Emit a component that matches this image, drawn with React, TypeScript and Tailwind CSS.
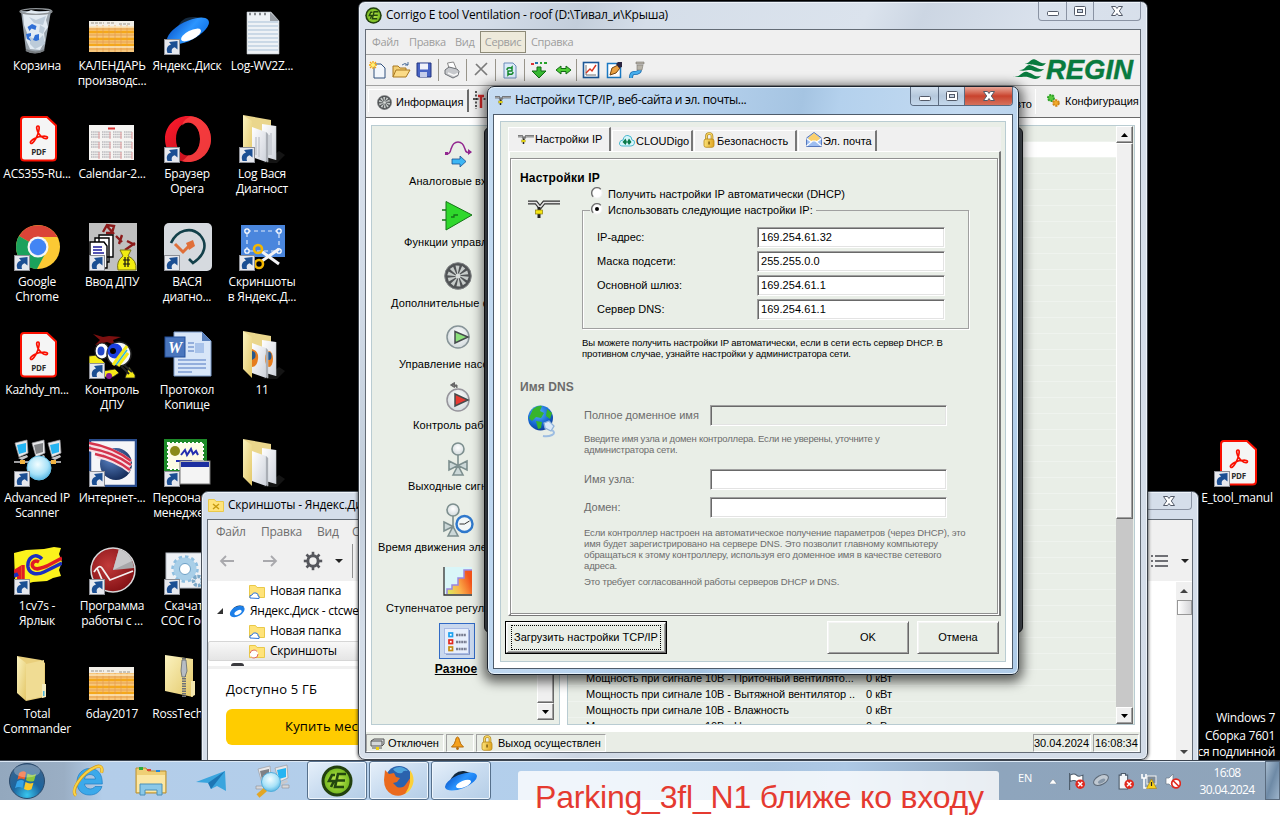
import React from "react";

type Kids = { children?: React.ReactNode };

const SEGOE = "font-['Open_Sans','Noto_Sans',sans-serif]";
const MSSANS = "font-['Liberation_Sans',sans-serif]";

/* ---------- shared gradients ---------- */
function Defs() {
  return (
    <svg width="0" height="0" className="absolute">
      <defs>
        <linearGradient id="folder" x1="0" x2="1" y1="0" y2="1">
          <stop offset="0" stopColor="#fbf3c0" />
          <stop offset="1" stopColor="#e3c768" />
        </linearGradient>
        <linearGradient id="paper" x1="0" x2="1" y1="0" y2="1">
          <stop offset="0" stopColor="#ffffff" />
          <stop offset="1" stopColor="#cfd3dc" />
        </linearGradient>
        <linearGradient id="blue" x1="0" x2="1" y1="0" y2="1">
          <stop offset="0" stopColor="#0a56c8" />
          <stop offset="0.5" stopColor="#2c95ff" />
          <stop offset="1" stopColor="#0d6fe6" />
        </linearGradient>
        <radialGradient id="glass" cx="0.45" cy="0.35" r="0.7">
          <stop offset="0" stopColor="#f2fdff" />
          <stop offset="0.6" stopColor="#a8e2f8" />
          <stop offset="1" stopColor="#49b0e0" />
        </radialGradient>
        <linearGradient id="opera" x1="0" x2="1" y1="0" y2="1">
          <stop offset="0" stopColor="#ff1b2d" />
          <stop offset="1" stopColor="#b30d18" />
        </linearGradient>
        <radialGradient id="orb" cx="0.5" cy="0.9" r="0.9">
          <stop offset="0" stopColor="#38c6ee" />
          <stop offset="0.45" stopColor="#1c659f" />
          <stop offset="1" stopColor="#3e638a" />
        </radialGradient>
        <linearGradient id="gold" x1="0" x2="1" y1="0" y2="0">
          <stop offset="0" stopColor="#fbe27a" />
          <stop offset="1" stopColor="#e0a520" />
        </linearGradient>
        <linearGradient id="heat" x1="0" x2="1" y1="1" y2="0.6">
          <stop offset="0" stopColor="#d8f060" />
          <stop offset="0.5" stopColor="#fbb24c" />
          <stop offset="1" stopColor="#f2541b" />
        </linearGradient>
        <radialGradient id="lime" cx="0.5" cy="0.5" r="0.5">
          <stop offset="0" stopColor="#c4ee50" />
          <stop offset="1" stopColor="#76ba22" />
        </radialGradient>
        <radialGradient id="red" cx="0.4" cy="0.4" r="0.7">
          <stop offset="0" stopColor="#c23b3b" />
          <stop offset="1" stopColor="#7d0c10" />
        </radialGradient>
        <radialGradient id="navy" cx="0.35" cy="0.3" r="0.8">
          <stop offset="0" stopColor="#5c86c8" />
          <stop offset="1" stopColor="#0f2450" />
        </radialGradient>
        <radialGradient id="bulb" cx="0.5" cy="0.4" r="0.6">
          <stop offset="0" stopColor="#ffffff" />
          <stop offset="1" stopColor="#d3dbdd" />
        </radialGradient>
        <radialGradient id="earth" cx="0.4" cy="0.3" r="0.8">
          <stop offset="0" stopColor="#5ab8ff" />
          <stop offset="0.6" stopColor="#1464d0" />
          <stop offset="1" stopColor="#0b2f80" />
        </radialGradient>
      </defs>
    </svg>
  );
}

/* ---------- desktop icons (48 x 48) ---------- */
function Ico({ children }: Kids) {
  return (
    <svg width="48" height="48" viewBox="0 0 48 48" className="block">
      {children}
    </svg>
  );
}

function Arrow() {
  return (
    <g transform="translate(0 32)">
      <rect x="0.5" y="0.5" width="15" height="15" fill="#e6e8ee" stroke="#8d8f96" />
      <path d="M3.500 14C1.500 9 4 6.500 7 5.500L5 3l8.500-1v8.500L10.700 8.300C8 9.200 7 11 8 14z" fill="#1c4f93" />
    </g>
  );
}

const Bin = () => (
  <Ico>
    <path d="M6 4l5 40q8 4.500 18 0l7-40z" transform="translate(1 0)" fill="#b4c0ca" opacity=".85" />
    <path d="M9 7l8-4 8 2 10-1-3 9 2 7-4 6 1 8-5 9-10-1-4-9 1-7-3-8z" fill="#e2ebf3" />
    <path d="M15 10l7 3 10-4-3 9-9-2zM16 30l8 3 5-5 2 9-10 5-5-5zM26 18l5 3-2 6-4-2z" fill="#bccbd9" />
    <ellipse cx="22" cy="4.500" rx="16" ry="2.800" fill="none" stroke="#8f9498" strokeWidth="1.300" />
    <path d="M13.500 20l4.500-3 4.500 2-1 4-4-1.500-2 2.500zM12 27l5-1v3l-2 1 2 4-4-2zM19 33l2-5 4-1v6l-3 1z" fill="#2f6fd6" />
    <path d="M12 43q10 5 18 0" fill="none" stroke="#777c80" strokeWidth="2" />
  </Ico>
);

const Sheet = ({ tall = false }: { tall?: boolean }) => (
  <Ico>
    <rect x="0" y={tall ? 12 : 14} width="45" height={tall ? 33 : 31} fill="#f7c77c" />
    <rect x="0" y={tall ? 12 : 14} width="45" height="6" fill="#f2efe8" />
    <path d="M2 16h13M18 16h8M30 17h12" stroke="#9b968c" strokeWidth="1" strokeDasharray="3 1" />
    <path d="M0 25h45M0 32h45M0 38h45" stroke="#f5a81b" strokeWidth="2.500" />
    <path d="M0 22h45M0 28h45M0 35h45M0 42h45" stroke="#dc8c33" strokeWidth=".7" />
    <path d="M8 18v27M14 18v27M20 18v27M26 18v27M32 18v27M38 18v27" stroke="#e59c4b" strokeWidth=".7" />
    <path d="M0 20h45M0 40h45" stroke="#fbe3b8" strokeWidth="1.500" />
  </Ico>
);

const Disk = () => (
  <Ico>
    <path d="M13 22C17 11 24 8 38 11L30 24z" fill="#152a40" />
    <ellipse cx="24" cy="24" rx="23" ry="9.500" fill="url(#blue)" transform="rotate(-27 24 24)" />
    <ellipse cx="27" cy="28" rx="11" ry="4.500" fill="#fff" transform="rotate(-27 27 28)" />
    <Arrow />
  </Ico>
);

const Notepad = () => (
  <Ico>
    <path d="M8 5h24l8 9v33H8z" fill="#eef2f6" stroke="#b9bfc6" strokeWidth=".6" />
    <path d="M9 15h30M9 19h30M9 23h30M9 27h30M9 31h30M9 35h30M9 39h30M9 43h30" stroke="#a7bfd6" />
    <path d="M31 5l9 9h-9z" fill="#9aa0a6" />
    <path d="M10 7h20" stroke="#85898d" strokeWidth="2.500" strokeDasharray="2 3" />
  </Ico>
);

const Pdf = ({ link = false }: { link?: boolean }) => (
  <Ico>
    <path d="M10 2h23l9 8.500V42q0 3.500-3.500 3.500H10.500Q7 45.500 7 42V5Q7 2 10 2z" fill="#f5f5f5" stroke="#fa0f00" strokeWidth="2" />
    <path d="M24 11c-2.500 0-1 5 1 8 2.500 4 8 6 8.500 3.600.4-2.200-8-1.600-12 .4-3 1.400-6 4-4.800 5.200 1.600 1.600 5.200-4 6.800-8.200 1.500-4 2.600-9 .5-9z" fill="none" stroke="#fa0f00" strokeWidth="1.700" />
    <text x="24.500" y="40" fontSize="8" fontWeight="700" textAnchor="middle" fill="#2c2c2c" fontFamily="Open Sans" letterSpacing="-.3">PDF</text>
    {link && <Arrow />}
  </Ico>
);

const CalSheet = () => (
  <Ico>
    <rect x="0" y="10" width="45" height="35" fill="#f5f4f2" />
    <path d="M19 13.500h7" stroke="#d33" strokeWidth="2" />
    {[17, 27, 37].map((y) => (
      <path key={y} d={`M2 ${y}h9M13 ${y}h9M24 ${y}h9M35 ${y}h8M2 ${y + 2.5}h9M13 ${y + 2.5}h9M24 ${y + 2.5}h9M35 ${y + 2.5}h8M2 ${y + 5}h9M13 ${y + 5}h9M24 ${y + 5}h9M35 ${y + 5}h8`} stroke="#b8b8bc" strokeWidth="1.300" strokeDasharray="1.500 .6" />
    ))}
    <path d="M10 17v7M21 17v7M32 17v7M43 17v7M10 27v7M21 27v7M32 27v7M43 27v7M10 37v7M21 37v7M32 37v7M43 37v7" stroke="#e49a9a" />
  </Ico>
);

const Opera = () => (
  <Ico>
    <path fillRule="evenodd" d="M24 1C11 1 1 11 1 24s10 23 23 23 23-10 23-23S37 1 24 1zm0 6.500c6 0 12 6 12 16.500s-6 16.500-12 16.500S12 34.500 12 24 18 7.500 24 7.500z" fill="url(#opera)" />
    <path d="M24 1c13 0 23 10 23 23S37 47 24 47q-3 0-6-1 3-2 6-5.500c6 0 12-6 12-16.500S30 7.500 24 7.500q-3 0-6 3Q20 3 28 1.300z" fill="#fb4343" opacity=".8" />
    <Arrow />
  </Ico>
);

const Folder = ({ art = 0, link = false }: { art?: number; link?: boolean }) => (
  <Ico>
    <path d="M40 36l6 4-8 8-14 0z" fill="#222" opacity=".6" />
    <path d="M4 0l28 5v12H12z" fill="#ead68c" />
    <path d="M23 9l14 2v34l-14-4z" fill="url(#paper)" />
    <path d="M13 12l14 5v30L13 42z" fill="url(#paper)" />
    {art === 1 && (
      <g>
        <path d="M13 18q7 2 6 10t-6 8z" fill="#e67c1c" />
        <path d="M13 20q5 1 3 7l-3 2z" fill="#27588c" />
        <ellipse cx="30" cy="28" rx="4" ry="8" fill="#e67c1c" />
        <ellipse cx="30" cy="25" rx="2.500" ry="4" fill="#27588c" />
      </g>
    )}
    {art === 2 && <path d="M17 22v18M20 22v20M32 18v22M30 20v20" stroke="#c3c8cf" strokeWidth="1.500" />}
    <path d="M27 17l2 2v28l-2-1zM37 11l0 34" fill="#9ea2aa" stroke="#c8ccd2" strokeWidth=".6" />
    <path d="M4 0l9 6v41L4 38z" fill="url(#folder)" />
    {link && <Arrow />}
  </Ico>
);

const Chrome = () => (
  <Ico>
    <circle cx="24" cy="24" r="22" fill="#fcc934" />
    <path d="M24 24L5 13A22 22 0 0 1 43.500 14H24z" fill="#db4437" />
    <path d="M5 13A22 22 0 0 0 23 46l9-17-8-5z" fill="#1ba15c" />
    <circle cx="24" cy="24" r="10.500" fill="#f6f6f4" />
    <circle cx="24" cy="24" r="8.300" fill="#4285f4" />
    <Arrow />
  </Ico>
);

const Dpu = () => (
  <Ico>
    <rect width="48" height="48" fill="#c0c0c0" />
    <path d="M14 9l4-7 7 1-2 7-6 0M17 2l8 9M27 13l6 6M33 12l-3 9M38 18l8 4M36 27l10-7" fill="none" stroke="#8b1a1a" strokeWidth="2.400" />
    <path d="M10 12h14v22H10zM6 15h14v24H6z" fill="#fff" stroke="#000" strokeWidth="1.400" />
    <path d="M1 19h14l3 4v22H1z" fill="#fff" stroke="#000" strokeWidth="1.400" />
    <path d="M4 24h9M4 27h9M4 30h11" stroke="#1b1b9a" strokeWidth="1.400" />
    <path d="M31 27h11l-3 6q9 4 8 14H29q-2-9 5-14z" fill="#f2ec10" stroke="#7a7410" />
    <path d="M34 37h7M34 41h7M36 34v10M39 34v10" stroke="#111" strokeWidth="1.200" />
    <Arrow />
  </Ico>
);

const Vasya = () => (
  <Ico>
    <rect width="48" height="48" rx="5" fill="#d6dadf" />
    <path d="M7 20C13 7 27 3 36 12c8 9 5 20-7 28l-4-4" fill="none" stroke="#13404a" strokeWidth="2.600" />
    <path d="M11 21l8 8 9-9" fill="none" stroke="#e0703a" strokeWidth="3" />
    <path d="M22 20l7-3 2 6-6 4z" fill="#e0703a" />
    <Arrow />
  </Ico>
);

const Snip = () => (
  <Ico>
    <rect x="2" y="2" width="44" height="32" fill="#4a86dd" />
    <rect x="8" y="8" width="32" height="20" fill="none" stroke="#dbe8fa" strokeWidth="1.200" strokeDasharray="4 3" />
    {[[8, 8], [40, 8], [8, 28], [40, 28]].map(([x, y]) => (
      <circle key={`${x}-${y}`} cx={x} cy={y} r="2.200" fill="#4a86dd" stroke="#fff" strokeWidth="1.300" />
    ))}
    <path d="M22 28l18 13M23 38l17-12" stroke="#f2f2f4" strokeWidth="3" />
    <circle cx="19" cy="26" r="4" fill="none" stroke="#f3b700" strokeWidth="2.600" />
    <circle cx="20" cy="41" r="4" fill="none" stroke="#f3b700" strokeWidth="2.600" />
    <Arrow />
  </Ico>
);

const Woody = () => (
  <Ico>
    <path d="M4 3l10 3 6-1 12 1-8 3 2 5-8-3-12 3 5-5z" fill="#7c1010" />
    <path d="M0 25l8-1 8 8-4 12H3l-3-6zM14 40l12-2 4 4-6 4H14zM40 36l6 8v3H36z" fill="#f5ea18" stroke="#222" strokeWidth=".8" />
    <path d="M34 33l9 8M32 35l8 8" stroke="#222" strokeWidth="2" />
    <ellipse cx="13" cy="20" rx="7" ry="8" fill="#fff" stroke="#222" strokeWidth="1.200" />
    <ellipse cx="12" cy="20" rx="3.500" ry="4.500" fill="#2448c8" />
    <circle cx="30" cy="23" r="12" fill="#f4f6f8" stroke="#222" strokeWidth="1.500" />
    <circle cx="26" cy="20" r="7.500" fill="#1b3fe0" />
    <path d="M24 34L38 15M29 35l10-13" stroke="#f5ea18" strokeWidth="3" />
    <path d="M27 34l11-15" stroke="#38b9d0" strokeWidth="1.500" />
    <circle cx="24" cy="20" r="3" fill="#000" />
    <circle cx="20" cy="45" r="3" fill="#801a90" />
    <Arrow />
  </Ico>
);

const Word = () => (
  <Ico>
    <path d="M10 1h28l9 9v35H10z" fill="#d8e6f8" stroke="#7d9ccb" />
    <path d="M38 1l9 9h-9z" fill="#587fbb" />
    <path d="M24 12h6M24 16h6M24 20h6M14 29h28M14 33h28M14 37h28M14 41h14" stroke="#7c9cd2" strokeWidth="1.300" />
    <rect x="31" y="12" width="9" height="10" fill="#a9c3ea" />
    <rect x="1" y="6" width="20" height="20" fill="#4a76bd" stroke="#25509b" />
    <text x="11" y="22" fontSize="16" fontStyle="italic" fontWeight="700" textAnchor="middle" fill="#fff" fontFamily="Liberation Serif">W</text>
  </Ico>
);

function Pc({ x, y, off = false }: { x: number; y: number; off?: boolean }) {
  return (
    <g transform={`translate(${x} ${y})`}>
      <path d="M1 4l12-3 1 13-9 4z" fill="#e8e8ea" stroke="#9c9ca0" strokeWidth=".7" />
      <path d="M3 6l9-2 0 9-7 2z" fill={off ? "#7f8184" : "#25b4f2"} />
      <path d="M4 19l9-3 1 2-6 3z" fill="#c9c9cc" />
    </g>
  );
}

const Monitors = () => (
  <Ico>
    <Pc x={0} y={0} />
    <Pc x={17} y={0} off />
    <Pc x={33} y={0} />
    <path d="M0 23h47" stroke="#d5d5d8" strokeWidth="1.500" />
    <path d="M6 21h5v4H6zM37 21h5v4h-5z" fill="#f0b240" />
    <circle cx="25" cy="29" r="12" fill="url(#glass)" stroke="#66bde2" />
    <Arrow />
  </Ico>
);

const Globe = () => (
  <Ico>
    <rect x="1" y="1" width="46" height="46" fill="#f5f5f8" stroke="#294c8c" strokeWidth="2.500" />
    <circle cx="27" cy="25" r="16" fill="url(#navy)" />
    <path d="M0 5q24 4 42 18M0 10q24 4 42 17M8 17q18 3 33 15" fill="none" stroke="#f7dfe3" strokeWidth="4.500" />
    <path d="M0 4q24 4 42 18M0 9q24 4 42 17M6 15q20 4 35 16" fill="none" stroke="#d4344c" strokeWidth="2.600" />
    <Arrow />
  </Ico>
);

const Cert = () => (
  <Ico>
    <rect x="0" y="0" width="43" height="32" fill="#1d8a28" />
    <rect x="4" y="4" width="35" height="26" fill="#fdfce4" stroke="#fff" strokeWidth="2" strokeDasharray="2 2" />
    <circle cx="11" cy="12" r="5" fill="#8a8a18" />
    <path d="M17 16l4-5 2 5 4-6 2 5 3-3 2 4M12 22h16" fill="none" stroke="#2430b0" strokeWidth="2" />
    <rect x="16" y="22" width="30" height="23" fill="#f4f4f4" stroke="#777" />
    <rect x="17" y="23" width="28" height="5" fill="#1c2fa0" />
    <Arrow />
  </Ico>
);

const OneC = () => (
  <Ico>
    <path d="M0 6l12-3 18-1 10-2 7 1-2 6 3 8-3 8 2 6-8 2-6 3-14 1-14 4-4-4z" fill="#fbf21c" />
    <path d="M0 25l5-3v10" fill="none" stroke="#e01c24" strokeWidth="4" />
    <path d="M28 12c-7-7-15-1-14 8 1 6 8 9 16 5l18-9" fill="none" stroke="#1b2fc0" strokeWidth="3.500" />
    <path d="M25 15c-5-3-8 2-6 5 3 4 8 1 14-1l15-8" fill="none" stroke="#e01c24" strokeWidth="3.500" />
    <path d="M9 18v14" stroke="#e01c24" strokeWidth="3.500" />
    <path d="M0 29l4-2" stroke="#1b2fc0" strokeWidth="4" />
    <Arrow />
  </Ico>
);

const Gauge = () => (
  <Ico>
    <circle cx="24" cy="23" r="22" fill="url(#red)" stroke="#d8d8da" strokeWidth="1.500" />
    <path d="M24 23L30 2q13 4 15 19z" fill="#a8a8aa" />
    <path d="M30 2q9 3 13 12L24 23z" fill="#c8c8ca" />
    <path d="M5 25q5-8 8-4 4 6 8 12L44 24M8 21l6 14" fill="none" stroke="#f4f0f0" strokeWidth="1.800" />
    <Arrow />
  </Ico>
);

const GearDoc = () => (
  <Ico>
    <rect x="2" y="6" width="46" height="35" fill="#eef1f5" stroke="#b8bec6" />
    <circle cx="21" cy="22" r="8.500" fill="none" stroke="#a9cfe8" strokeWidth="6" />
    <circle cx="21" cy="22" r="12.500" fill="none" stroke="#8fbfe0" strokeWidth="2.500" strokeDasharray="3.500 3" />
    <circle cx="21" cy="22" r="5.500" fill="#fff" stroke="#6a9fc6" />
    <circle cx="34" cy="34" r="4.500" fill="none" stroke="#7da9c8" strokeWidth="3.500" strokeDasharray="3 1" />
    <Arrow />
  </Ico>
);

const PlainFolder = () => (
  <Ico>
    <path d="M3 1l24 4 4 3v34l-19 4z" fill="#e9cf7c" />
    <path d="M12 9l18-4v36l-18 4z" fill="#f0dc93" />
    <path d="M3 1l9 7q-1 20 0 38L3 38z" fill="url(#folder)" />
    <path d="M28 29l4 0v13l-4 1z" fill="#f5ecc0" />
    <path d="M29 36h1.500v5H29z" fill="#51b6d8" />
  </Ico>
);

const Zip = () => (
  <Ico>
    <path d="M1 0l28 4v38l-28-6z" fill="url(#folder)" />
    <path d="M27 26l4 0v14l-4 2z" fill="#f4e7ae" />
    <path d="M20 3v39" stroke="#6e7176" strokeWidth="4" strokeDasharray="1.500 1" />
    <path d="M18 5h4l1 11-2 6h-3l-1-6z" fill="#b7bdc4" stroke="#555b62" strokeWidth=".7" />
  </Ico>
);

type Cell = { icon: React.ReactNode; a: string; b?: string } | null;

const cells: Cell[] = [
  { icon: <Bin />, a: "Корзина" },
  { icon: <Sheet />, a: "КАЛЕНДАРЬ", b: "производс..." },
  { icon: <Disk />, a: "Яндекс.Диск" },
  { icon: <Notepad />, a: "Log-WV2Z..." },
  { icon: <Pdf />, a: "ACS355-Ru..." },
  { icon: <CalSheet />, a: "Calendar-2..." },
  { icon: <Opera />, a: "Браузер", b: "Opera" },
  { icon: <Folder art={2} link />, a: "Log Вася", b: "Диагност" },
  { icon: <Chrome />, a: "Google", b: "Chrome" },
  { icon: <Dpu />, a: "Ввод ДПУ" },
  { icon: <Vasya />, a: "ВАСЯ", b: "диагно..." },
  { icon: <Snip />, a: "Скриншоты", b: "в Яндекс.Д..." },
  { icon: <Pdf />, a: "Kazhdy_m..." },
  { icon: <Woody />, a: "Контроль", b: "ДПУ" },
  { icon: <Word />, a: "Протокол", b: "Копище" },
  { icon: <Folder art={1} />, a: "11" },
  { icon: <Monitors />, a: "Advanced IP", b: "Scanner" },
  { icon: <Globe />, a: "Интернет-..." },
  { icon: <Cert />, a: "Персональн", b: "менеджер п" },
  { icon: <Folder />, a: "" },
  { icon: <OneC />, a: "1cv7s -", b: "Ярлык" },
  { icon: <Gauge />, a: "Программа", b: "работы с ..." },
  { icon: <GearDoc />, a: "Скачать", b: "СОС ГосС" },
  null,
  { icon: <PlainFolder />, a: "Total", b: "Commander" },
  { icon: <Sheet tall />, a: "6day2017" },
  { icon: <Zip />, a: "RossTech-1..." },
];

function Shortcut({ cell }: { cell: Cell }) {
  if (!cell) return <div />;
  return (
    <div className="flex flex-col items-center">
      {cell.icon}
      <div className={`${SEGOE} mt-[3px] -ml-px text-center text-[12px] leading-[15px] tracking-[-0.25px] whitespace-nowrap text-white`}>
        <div>{cell.a}</div>
        {cell.b && <div>{cell.b}</div>}
      </div>
    </div>
  );
}

/* ---------- window buttons ---------- */
function Glyph({ kind }: { kind: "min" | "max" | "close" }) {
  return (
    <svg width="14" height="12" viewBox="0 0 14 12">
      {kind === "min" && <rect x="1.500" y="6.500" width="11" height="4" rx="1" fill="#fff" stroke="#535a68" />}
      {kind === "max" && (
        <g fill="#fff" stroke="#535a68">
          <rect x="1.500" y="1.500" width="11" height="9" rx="1" />
          <rect x="4.500" y="4.500" width="5" height="3" fill="#c8d4e2" />
        </g>
      )}
      {kind === "close" && (
        <path d="M1.500 1.500h4L7 3.500l1.500-2h4L9.300 6l3.200 4.500h-4L7 8.500l-1.500 2h-4L4.700 6z" fill="#fff" stroke="#535a68" />
      )}
    </svg>
  );
}

/* ---------- small pictures ---------- */
const Logo = ({ s }: { s: number }) => (
  <svg width={s} height={s} viewBox="0 0 32 32" className="block shrink-0">
    <circle cx="16" cy="16" r="15.500" fill="#22400e" />
    <circle cx="16" cy="16" r="12.500" fill="url(#lime)" />
    <path d="M14 10h-3l-3 6h5l-3 6M25 9h-8l-3 13h9M16 15.500h8" fill="none" stroke="#23480f" strokeWidth="2.600" />
  </svg>
);

const Tee = ({ w, h }: { w: number; h: number }) => (
  <svg width={w} height={h} viewBox="0 0 32 18" className="block shrink-0">
    <path d="M0 2.500h8l4 5 4-5h16" fill="none" stroke="#333" strokeWidth="3.800" />
    <path d="M0 2.500h8l4 5 4-5h16" fill="none" stroke="#e4e4e4" strokeWidth="1.600" />
    <path d="M11 7v11" stroke="#222" strokeWidth="3" />
    <rect x="7.500" y="10" width="7" height="4" fill="#f4e411" stroke="#8a7d10" strokeWidth=".7" />
  </svg>
);

const Fan = ({ s }: { s: number }) => (
  <svg width={s} height={s} viewBox="0 0 28 28" className="block shrink-0">
    <circle cx="14" cy="14" r="13.300" fill="#505355" stroke="#808385" />
    {[0, 36, 72, 108, 144, 180, 216, 252, 288, 324].map((a) => (
      <path key={a} d="M13.500 13L11.500 3.500l4 .2z" fill="#c7ccca" transform={`rotate(${a} 14 14)`} />
    ))}
    <circle cx="14" cy="14" r="2.500" fill="#d8dcda" />
  </svg>
);

const Lock = () => (
  <svg width="12" height="16" viewBox="0 0 12 16" className="block shrink-0">
    <path d="M3.500 8V4.500q0-3 2.800-3t2.700 3V8" fill="none" stroke="#a8801c" strokeWidth="2.600" />
    <path d="M3.500 8V4.500q0-3 2.800-3t2.700 3V8" fill="none" stroke="#f6d460" strokeWidth="1.300" />
    <rect x="1" y="7" width="10" height="8.300" rx="2" fill="url(#gold)" stroke="#b98818" strokeWidth=".8" />
    <rect x="5.300" y="9.500" width="1.500" height="3" fill="#7d5c10" />
  </svg>
);

const sideItems: { label: string; pad: string; pic: React.ReactNode }[] = [
  {
    label: "Аналоговые входы",
    pad: "pl-[37px]",
    pic: (
      <g>
        <path d="M1 14q5 1 6-5Q9 2 14 2t7 7q1 5 6 3" fill="none" stroke="#92278f" strokeWidth="1.500" />
        <path d="M24 9l4 3-4 3zM1 12h3v3H1z" fill="#92278f" />
        <path d="M8 19h8v-3l6 5.500-6 5.500v-3H8z" fill="#3cb6f4" stroke="#1b4f8f" strokeWidth=".8" />
      </g>
    ),
  },
  {
    label: "Функции управления",
    pad: "pl-[32px]",
    pic: (
      <g>
        <path d="M2 0.500l26 13.500L2 29z" fill="#2fd82c" stroke="#157518" />
        <path d="M-2 9h4M-2 19h4M7 16h3v-2h4" fill="none" stroke="#157518" strokeWidth="1.300" />
      </g>
    ),
  },
  { label: "Дополнительные функции", pad: "pl-[19px]", pic: <Fan s={28} /> },
  {
    label: "Управление насосами",
    pad: "pl-[27px]",
    pic: (
      <g>
        <circle cx="14" cy="14" r="11" fill="url(#bulb)" stroke="#879498" strokeWidth="1.500" />
        <path d="M11 8.500l13 5.500-13 6z" fill="#8ce07c" stroke="#454b4d" strokeWidth="1.500" />
      </g>
    ),
  },
  {
    label: "Контроль работы",
    pad: "pl-[41px]",
    pic: (
      <g>
        <circle cx="14" cy="16" r="11" fill="url(#bulb)" stroke="#96949b" strokeWidth="1.500" />
        <path d="M11 10l13 6-13 6z" fill="#e83a32" stroke="#454b4d" strokeWidth="1.500" />
        <path d="M13 4V1H9M6.500 1l4-2.500v5z" fill="#666" stroke="#666" />
      </g>
    ),
  },
  {
    label: "Выходные сигналы",
    pad: "pl-[36px]",
    pic: (
      <g stroke="#7d8f8f" strokeWidth="1.600" fill="#f3f7f7">
        <circle cx="14" cy="4" r="6" fill="url(#bulb)" />
        <path d="M14 10v11" />
        <path d="M5 16l9 4.500L5 25zM23 16l-9 4.500 9 4.500zM9 30l5-9.500 5 9.500z" fill="#ccd8d8" />
      </g>
    ),
  },
  {
    label: "Время движения элементов",
    pad: "pl-[6px]",
    pic: (
      <g stroke="#7d8f8f" strokeWidth="1.600" fill="#f3f7f7">
        <circle cx="9" cy="4" r="6" fill="url(#bulb)" />
        <path d="M9 10v11" />
        <path d="M0 16l9 4.500L0 25zM4 30l5-9.500 5 9.500z" fill="#ccd8d8" />
        <circle cx="20.500" cy="18" r="8" stroke="#2f78cc" strokeWidth="2.400" />
        <path d="M20.500 18l5-3M20.500 18h-5" stroke="#333" strokeWidth="1" />
      </g>
    ),
  },
  {
    label: "Ступенчатое регулирование",
    pad: "pl-[14px]",
    pic: (
      <g>
        <rect x="0" y="0" width="28" height="27" fill="#d9f6f8" />
        <path d="M3 27v-5h5v-4h6v-7h6V3h8v24z" fill="url(#heat)" />
        <path d="M3 27v-5h5v-4h6v-7h6V3h8" fill="none" stroke="#9a86e0" strokeWidth="1.500" />
        <path d="M0 0v28h28" fill="none" stroke="#333" strokeWidth="1.300" />
      </g>
    ),
  },
];

const ScrollBtn = ({ up = false }: { up?: boolean }) => (
  <div className="flex h-[17px] w-[17px] shrink-0 items-center justify-center border border-t-white border-l-white border-r-[#696969] border-b-[#696969] bg-[#f0f0f0] shadow-[inset_-1px_-1px_0_#a0a0a0]">
    <svg width="7" height="4" viewBox="0 0 7 4">
      <path d={up ? "M0 4h7L3.500 0z" : "M0 0h7L3.500 4z"} fill="#000" />
    </svg>
  </div>
);

const THUMB = "w-[17px] border border-t-white border-l-white border-r-[#696969] border-b-[#696969] bg-[#f0f0f0] shadow-[inset_-1px_-1px_0_#a0a0a0]";

/* ---------- toolbar ---------- */
const Sep = () => (
  <div className="flex h-[22px] w-1 justify-center">
    <div className="h-full w-px bg-[#98948a]" />
  </div>
);

function Tool({ w, children }: { w: string } & Kids) {
  return (
    <div className={`${w} flex items-center justify-center`}>
      <svg width="18" height="18" viewBox="0 0 18 18" className="overflow-visible">
        {children}
      </svg>
    </div>
  );
}

function Toolbar() {
  return (
    <div className="flex h-[31px] items-center border-b border-[#a0a0a0] bg-[#f0f0f0]">
      <Tool w="w-6">
        <path d="M5 3h7l4 4v10H5z" fill="#f2f6fb" stroke="#31507c" />
        <path d="M4 0v8M0 4h8M1 1l6 6M7 1L1 7" stroke="#f5a50a" strokeWidth="1.300" />
        <circle cx="4" cy="4" r="2" fill="#fff27a" />
      </Tool>
      <Tool w="w-[22px]">
        <path d="M1 16V5h5l2 2h6v3" fill="#f3cf74" stroke="#a97820" />
        <path d="M1 16l3-7h14l-4 7z" fill="#fbdb87" stroke="#a97820" />
        <path d="M10 4q3-3 6 0M16 1v3h-3" fill="none" stroke="#4d6f9a" />
      </Tool>
      <Tool w="w-6">
        <path d="M2 2h14v14H3.500L2 14.500z" fill="#4763c4" stroke="#23347e" />
        <rect x="5" y="2.500" width="8" height="6" fill="#f0f2fa" />
        <rect x="5" y="11" width="7" height="5" fill="#c5cdea" />
      </Tool>
      <Sep />
      <Tool w="w-6">
        <path d="M6 7L4.500 2l6-1L13 7" fill="#fff" stroke="#888" />
        <path d="M2 9l4-3 8 2 2 2.500-1 4-5 2.500-8-4z" fill="#c6c8cc" stroke="#6d7075" />
        <path d="M5 12l6 2.500 4-2" fill="none" stroke="#f8f8f8" strokeWidth="1.500" />
      </Tool>
      <Sep />
      <Tool w="w-[25px]">
        <path d="M4 3l11 11M15 2L3 14" stroke="#7b7b7b" strokeWidth="1.700" />
      </Tool>
      <Sep />
      <Tool w="w-[25px]">
        <path d="M3 2h9l3 3v12H3z" fill="#dcebfa" stroke="#6b8cb8" />
        <path d="M6 9q0-3 4-2l1-1v4H7M12 11q0 3-4 2l-1 1v-4h4" fill="none" stroke="#15892a" strokeWidth="1.500" />
      </Tool>
      <Sep />
      <Tool w="w-[26px]">
        <path d="M7 6h4v4h5l-7 7-7-7h5z" fill="#37b932" stroke="#126a16" />
        <path d="M1 2h3v2H1z" fill="#d33" />
        <path d="M5 1h3v2H5z" fill="#27a" />
        <path d="M10 1h2v2h-2zM14 1h3v2h-3z" fill="#27a32c" />
      </Tool>
      <Tool w="w-[22px]">
        <path d="M2 9l5-4v2.500h5V5l5 4-5 4v-2.500H7V13z" fill="#4fce36" stroke="#126a16" />
      </Tool>
      <Sep />
      <Tool w="w-[26px]">
        <rect x="1.500" y="1.500" width="15" height="15" fill="#fff" stroke="#1b5797" strokeWidth="1.600" />
        <path d="M4 4v10h10" fill="none" stroke="#777" />
        <path d="M4 12l4-4 2 2 4-6" fill="none" stroke="#d8341f" strokeWidth="1.400" />
      </Tool>
      <Tool w="w-[21px]">
        <rect x="1.500" y="2.500" width="13" height="14" fill="#fff" stroke="#1b7ac4" strokeWidth="1.500" />
        <path d="M4 14l2-7 6-3 2 3-4 5z" fill="#e9a040" stroke="#754511" />
        <path d="M12 1l4 0 0 5-3 1-3-4z" fill="#2b2540" />
      </Tool>
      <Tool w="w-6">
        <path d="M12 8q0 4-6 4-3 0-3 5" fill="none" stroke="#1c6fb4" strokeWidth="4" />
        <path d="M12 8q0 4-6 4-3 0-3 5" fill="none" stroke="#47b0ee" strokeWidth="2.500" />
        <path d="M8 1h8v2H8zM9 4h6l-1 5H9z" fill="#b7b3a8" stroke="#7a776e" strokeWidth=".6" />
      </Tool>
      <div className="mr-[7px] ml-auto flex items-center text-[#087a3e]">
        <svg width="33" height="22" viewBox="0 0 34 22">
          <path d="M0 18c8 1 9-7 15-5s8 6 14 4c-4 5-9 3-13 1.500S8 19 0 18zM6 11c7 1 7-6 12-5s8 5 14 4c-4 4-8 3-12 1.500S12 13 6 11zM12 4c5 1 6-5 10-4s6 5 12 4c-3 4-7 3-10 2S17 6 12 4z" fill="#087a3e" />
        </svg>
        <div className={`${MSSANS} text-[27.5px] leading-[22px] font-bold italic [-webkit-text-stroke:0.4px_#087a3e]`}>REGIN</div>
      </div>
    </div>
  );
}

/* ---------- Corrigo main window ---------- */
const powerRows = [
  "Мощность при сигнале 10В - Приточный вентилято...",
  "Мощность при сигнале 10В - Вытяжной вентилятор ..",
  "Мощность при сигнале 10В - Влажность",
  "Мощность при сигнале 10В - Нагрев",
];

function MainWindow() {
  return (
    <div className="absolute top-px left-[358px] flex h-[759px] w-[790px] flex-col rounded-[7px] border border-[#3a4048] bg-[linear-gradient(115deg,#dde4ee_0,#d3dce8_12%,#c3cedb_20%,#d5dee9_26%,#dbe3ed_45%,#ccd6e3_50%,#d9e1ec_60%,#d3dce8_100%)] shadow-[inset_0_0_0_1px_#eef3f9,0_0_3px_1px_rgba(0,0,0,0.5)]">
      <div className="flex h-[27px] items-start">
        <div className="mt-[5px] ml-[6px]">
          <Logo s={17} />
        </div>
        <div className={`${SEGOE} mt-[4px] ml-[4px] text-[12px] leading-[18px] tracking-[-0.2px] text-black`}>
          Corrigo E tool Ventilation - roof (D:\Тивал_и\Крыша)
        </div>
        <div className="mr-[6px] ml-auto flex h-[19px] overflow-hidden rounded-b-[4px] border border-t-0 border-[#8a93a3]">
          <div className="flex w-[28px] items-center justify-center border-r border-[#8a93a3]"><Glyph kind="min" /></div>
          <div className="flex w-[27px] items-center justify-center border-r border-[#8a93a3]"><Glyph kind="max" /></div>
          <div className="flex w-[46px] items-center justify-center"><Glyph kind="close" /></div>
        </div>
      </div>
      <div className="mx-[6px] mb-[6px] flex flex-1 flex-col overflow-hidden border border-[#646c76] bg-white">
        <div className={`${SEGOE} flex h-[25px] items-center border-b border-[#a0a0a0] bg-[#f0f0f0] pl-[6px] text-[11px] tracking-[-0.35px] text-[#9d9d9d]`}>
          <div className="w-[37px]">Файл</div>
          <div className="w-[46px]">Правка</div>
          <div className="w-[25px]">Вид</div>
          <div className="flex h-[22px] w-[46px] items-center justify-center border border-[#8e8b78] bg-[#eeeadb]">Сервис</div>
          <div className="ml-[5px]">Справка</div>
        </div>
        <Toolbar />
        <div className={`${MSSANS} flex h-[32px] items-start border-b border-[#6a6a6a] bg-[#f0f0f0] pt-[3px] text-[11px] leading-[13px]`}>
          <div className="ml-[2px] flex h-[23px] w-[101px] items-center border-t border-r-2 border-l border-t-white border-l-white border-r-[#6a6a6a] pt-[3px] pl-[8px]">
            <Fan s={15} />
            <span className="ml-[4px]">Информация</span>
          </div>
          <svg width="24" height="24" viewBox="0 0 24 24" className="ml-[4px]">
            <path d="M3 2v18M0 10h14" stroke="#222" strokeWidth="1.500" strokeDasharray="2 1.500" />
            <path d="M8 7v12M5 7h6" stroke="#d62a2a" strokeWidth="2.500" />
          </svg>
          <div className="ml-auto flex h-[25px] w-[34px] items-center border-r border-white pt-[5px] pl-[6px]">Авто</div>
          <div className="flex h-[23px] items-center">
            <svg width="15" height="15" viewBox="0 0 15 15" className="ml-[10px]">
              <circle cx="5" cy="5" r="3" fill="#58c93e" stroke="#2fa028" strokeWidth="2" strokeDasharray="2 1" />
              <circle cx="10" cy="10" r="2.800" fill="#f2ab28" stroke="#d08418" strokeWidth="2" strokeDasharray="2 1" />
            </svg>
            <span className="mt-[2px] ml-[4px] w-[75px]">Конфигурация</span>
          </div>
        </div>
        <div className={`${MSSANS} flex h-[614px] gap-[7px] pt-[7px] pl-[5px] text-[11px] leading-[13px]`}>
          {/* side list */}
          <div className="flex h-[600px] w-[189px] overflow-hidden border border-[#b9ccd2] bg-[#e9eee7]">
            <div className="w-[165px] shrink-0 pt-[14px]">
              {sideItems.map((it) => (
                <div key={it.label} className="h-[61px]">
                  <svg width="28" height="30" viewBox="0 0 28 30" className="ml-[72px] block overflow-visible">
                    {it.pic}
                  </svg>
                  <div className={`${it.pad} mt-[5px] w-[165px] overflow-visible tracking-[0.1px] whitespace-nowrap`}>{it.label}</div>
                </div>
              ))}
              <div className="-mt-[5px] ml-[67px] flex h-[36px] w-[36px] items-center justify-center border border-[#316ac5] bg-[#c9d8ee]">
                <svg width="26" height="27" viewBox="0 0 26 27">
                  <path d="M2 26h23.500V2" fill="none" stroke="#7d8fc0" strokeWidth="1.500" />
                  <rect x=".5" y=".5" width="24" height="25" fill="#e8effc" stroke="#a9bbe4" />
                  <rect x="5" y="5" width="3.500" height="3.500" fill="#fff" stroke="#1ca0ee" strokeWidth="1.700" />
                  <rect x="5" y="12" width="3.500" height="3.500" fill="#fff" stroke="#e02a20" strokeWidth="1.700" />
                  <rect x="5" y="19" width="3.500" height="3.500" fill="#fff" stroke="#c48e14" strokeWidth="1.700" />
                  <path d="M12 7h10M12 14h11M12 21h11" stroke="#777c90" strokeWidth="2.500" strokeDasharray="2 .6" />
                </svg>
              </div>
              <div className="mt-[4px] ml-[3px] w-[162px] text-center text-[12px] font-bold tracking-[0.1px] underline">Разное</div>
            </div>
            <div className="flex h-[594px] w-[17px] flex-col bg-[#c8c8c8]">
              <ScrollBtn up />
              <div className={`${THUMB} flex-1`} />
              <ScrollBtn />
            </div>
          </div>
          {/* settings table */}
          <div className="flex h-[600px] w-[568px] overflow-hidden border border-[#b9ccd2] bg-[#e9eee7]">
            <div className="flex flex-1 flex-col bg-[repeating-linear-gradient(to_bottom,#e9eee7_0,#e9eee7_15px,#eff3ee_15px,#eff3ee_16px)]">
              <div className="mt-[16px] h-[15px] bg-white" />
              <div className="mt-auto h-[54px] overflow-hidden">
                {powerRows.map((r) => (
                  <div key={r} className="flex h-[16px] items-center pl-[18px] whitespace-nowrap">
                    <div className="w-[280px] tracking-[-0.08px]">{r}</div>
                    <div>0 кВт</div>
                  </div>
                ))}
              </div>
            </div>
            <div className="mr-px flex w-[17px] flex-col bg-[#c8c8c8]">
              <ScrollBtn up />
              <div className={`${THUMB} h-[376px]`} />
              <div className="flex-1" />
              <ScrollBtn />
            </div>
          </div>
        </div>
        <div className={`${MSSANS} flex flex-1 items-end bg-[#e9ede6] text-[11px] leading-[13px]`}>
          <div className="flex h-[18px] w-[78px] items-center border border-[#a0a0a0] border-r-white border-b-white pl-[3px]">
            <svg width="15" height="13" viewBox="0 0 15 13">
              <path d="M1 4l3-2h10v5l-2 2H1z" fill="#d5d8da" stroke="#555" />
              <path d="M1 4h11v5M2 11h10" fill="none" stroke="#555" />
              <path d="M6 10h3v3H6z" fill="#f0cf10" />
            </svg>
            <span className="ml-[3px]">Отключен</span>
          </div>
          <div className="ml-[2px] flex h-[18px] w-[28px] items-center border border-[#a0a0a0] border-r-white border-b-white pl-[4px]">
            <svg width="13" height="14" viewBox="0 0 13 14">
              <path d="M6.500 1Q8 1 8.500 4.500t4 6.500H.5Q4 8 4.500 4.500 5 1 6.500 1z" fill="#f5a11c" stroke="#b56a08" />
              <circle cx="6.500" cy="12.500" r="1.400" fill="#b56a08" />
            </svg>
          </div>
          <div className="ml-[2px] flex h-[18px] w-[130px] items-center border border-[#a0a0a0] border-r-white border-b-white pl-[4px]">
            <Lock />
            <span className="ml-[5px] whitespace-nowrap">Выход осуществлен</span>
          </div>
          <div className="ml-auto flex h-[18px] w-[58px] items-center border border-[#a0a0a0] border-r-white border-b-white whitespace-nowrap">30.04.2024</div>
          <div className="mr-px ml-[2px] flex h-[18px] w-[46px] items-center border border-[#a0a0a0] border-r-white border-b-white pl-px">16:08:34</div>
        </div>
      </div>
    </div>
  );
}

/* ---------- TCP/IP dialog ---------- */
function Field({ w, dis = false, children }: { w: string; dis?: boolean } & Kids) {
  return (
    <div className={`${w} ${dis ? "bg-[#e9eee7]" : "bg-white"} flex h-[21px] items-center border border-t-[#a0a0a0] border-l-[#a0a0a0] border-r-white border-b-white pb-px pl-[3px] tracking-[0.05px] text-black shadow-[inset_1px_1px_0_#696969,inset_-1px_-1px_0_#e3e3e3]`}>
      {children}
    </div>
  );
}

const Radio = ({ on = false }: { on?: boolean }) => (
  <svg width="12" height="12" viewBox="0 0 12 12" className="-mt-[2px] block">
    <circle cx="6" cy="6" r="5" fill="#fff" stroke="#f4f4f4" />
    <path d="M2.200 9.800A5.300 5.300 0 0 1 9.800 2.200" fill="none" stroke="#707070" strokeWidth="1.400" />
    {on && <circle cx="6" cy="6" r="2" fill="#000" />}
  </svg>
);

function Tab({ w, icon, active = false, children }: { w: string; icon: React.ReactNode; active?: boolean } & Kids) {
  return (
    <div className={`${w} ${active ? "h-[24px]" : "h-[21px]"} flex items-center border-t border-l border-r-2 border-t-white border-l-white border-r-[#777] bg-[#f0f0f0] whitespace-nowrap`}>
      {icon}
      {children}
    </div>
  );
}

const ipRows = [
  ["IP-адрес:", "169.254.61.32"],
  ["Маска подсети:", "255.255.0.0"],
  ["Основной шлюз:", "169.254.61.1"],
  ["Сервер DNS:", "169.254.61.1"],
];

const BTN = "flex items-center justify-center border border-t-white border-l-white border-r-[#696969] border-b-[#696969] bg-[#e9eee7] shadow-[inset_1px_1px_0_#f4f4f4,inset_-1px_-1px_0_#a0a0a0] pb-px";

function Dialog() {
  return (
    <div className="absolute top-[86px] left-[487px] flex h-[589px] w-[532px] flex-col rounded-[7px] border border-[#1c242e] bg-[linear-gradient(100deg,#c6dcf2_0,#b9d4ef_30%,#a5c4e2_50%,#b4d1ed_56%,#c3daf1_75%,#aecbe8_100%)] shadow-[inset_0_0_0_1px_#e6f2fc,0_3px_12px_4px_rgba(0,0,0,0.6)]">
      <div className="flex h-[27px] items-start">
        <div className="mt-[9px] ml-[7px]">
          <Tee w={16} h={9} />
        </div>
        <div className={`${SEGOE} mt-[4px] ml-[4px] text-[12px] leading-[18px] tracking-[-0.32px] text-black`}>
          Настройки TCP/IP, веб-сайта и эл. почты...
        </div>
        <div className="mr-[5px] ml-auto flex h-[19px] overflow-hidden rounded-b-[4px] border border-t-0 border-[#5b6b80]">
          <div className="flex w-[28px] items-center justify-center border-r border-[#5b6b80] bg-linear-to-b from-[#d2e0ee] via-[#b5c8dc] to-[#c4d8ec]"><Glyph kind="min" /></div>
          <div className="flex w-[26px] items-center justify-center border-r border-[#5b6b80] bg-linear-to-b from-[#d2e0ee] via-[#b5c8dc] to-[#c4d8ec]"><Glyph kind="max" /></div>
          <div className="flex w-[47px] items-center justify-center bg-linear-to-b from-[#e8a698] via-[#c9422d] to-[#d5715c]"><Glyph kind="close" /></div>
        </div>
      </div>
      <div className="mx-[5px] mb-[5px] flex flex-1 border border-[#4f5c6b] bg-white p-[6px]">
        <div className={`${MSSANS} flex-1 border border-[#b9ccd2] bg-[#e9eee7] pl-[7px] text-[11px] leading-[13px] text-black`}>
          <div className="mt-[5px] flex h-[24px] w-[493px] items-end bg-[#f0f0f0]">
            <Tab active w="w-[103px]" icon={<div className="mr-px ml-[9px]"><Tee w={16} h={13} /></div>}>
              <span>Настройки IP</span>
            </Tab>
            <Tab
              w="w-[81px] ml-px"
              icon={
                <svg width="16" height="13" viewBox="0 0 16 13" className="-mt-px mr-px ml-[6px]">
                  <path d="M4 12q-4 0-3.500-3T4 6q1-5 5-4.500T13 6q3 0 2.500 3T12 12z" fill="#d5f5fb" stroke="#4cb9cf" />
                  <path d="M3.500 8l3-3.500L8 8l-1.500 3zM8 8l2-3.500L12.500 8 10 11z" fill="#0b7a4a" />
                </svg>
              }
            >
              <span>CLOUDigo</span>
            </Tab>
            <Tab w="w-[103px] ml-px" icon={<div className="-mt-[3px] mr-[2px] ml-[8px]"><Lock /></div>}>
              <span className="tracking-[0.1px]">Безопасность</span>
            </Tab>
            <Tab
              w="w-[79px] ml-px"
              icon={
                <svg width="16" height="15" viewBox="0 0 16 15" className="-mt-[3px] mr-px ml-[7px]">
                  <path d="M.5 6L8 .5 15.500 6v8.500H.5z" fill="#9dbdf0" stroke="#5577bd" />
                  <path d="M2 6l6-5 6 5-2 3H4z" fill="#fbd06c" />
                  <path d="M.5 14l6-5h3l6 5M.5 6.500l5 3.500M15.500 6.500l-5 3.500" fill="none" stroke="#fff" strokeWidth="1.200" />
                </svg>
              }
            >
              <span>Эл. почта</span>
            </Tab>
          </div>
          {/* page frame */}
          <div className="h-[465px] w-[493px] border-t border-l-2 border-r-2 border-b-2 border-t-white border-l-white border-r-[#777] border-b-[#777] pt-[6px]">
            <div className="h-[456px] w-[488px] border border-[#909090] shadow-[inset_1px_1px_0_#fff,1px_1px_0_#fff]">
              <div className="h-[201px] px-[9px] pt-[11px]">
                <div className="h-[16px] text-[12px] leading-[16px] font-bold tracking-[0.15px]">Настройки IP</div>
                <div className="flex">
                  <div className="w-[62px] pt-[14px] pl-[8px]">
                    <Tee w={32} h={18} />
                  </div>
                  <div className="w-[387px]">
                    <div className="flex h-[16px] items-center pl-[9px]">
                      <Radio />
                      <span className="ml-[5px] whitespace-nowrap">Получить настройки IP автоматически (DHCP)</span>
                    </div>
                    <fieldset className="h-[127px] border border-[#a0a0a0] pb-1 shadow-[inset_1px_0_0_#fff,1px_1px_0_#fff]">
                      <legend className="ml-[7px] flex h-[16px] items-center px-px pr-[3px]">
                        <Radio on />
                        <span className="ml-[5px] whitespace-nowrap">Использовать следующие настройки IP:</span>
                      </legend>
                      <div className="flex flex-col gap-[3px] pt-[9px] pl-[14px]">
                        {ipRows.map(([l, v]) => (
                          <div key={l} className="flex items-center">
                            <div className="w-[160px]">{l}</div>
                            <Field w="w-[188px]">{v}</Field>
                          </div>
                        ))}
                      </div>
                    </fieldset>
                    <div className="mt-[8px] text-[9.500px] leading-[11px] tracking-[-0.11px] whitespace-nowrap">
                      Вы можете получить настройки IP автоматически, если в сети есть сервер DHCP. В
                      <br />
                      противном случае, узнайте настройки у администратора сети.
                    </div>
                  </div>
                </div>
              </div>
              <div className="px-[9px] pt-[19px] text-[#6c6c6c]">
                <div className="h-[16px] text-[12px] leading-[16px] font-bold tracking-[0.1px]">Имя DNS</div>
                <div className="flex">
                  <div className="w-[64px] pt-[10px] pl-[7px]">
                    <svg width="32" height="34" viewBox="0 0 32 34">
                      <circle cx="13.500" cy="13" r="12.500" fill="url(#earth)" />
                      <path d="M6 4q5-4 9-3l-2 5 4 2-3 5-5-1-4 4-3-3zM20 4l5 4-2 6-4-3zM9 16l6 1-1 6-3 1z" fill="#37b42c" />
                      <path d="M17 18l5-2 5 5-3 5-6-3z" fill="#d9e8f8" stroke="#8fb1d8" strokeWidth="1.300" />
                      <path d="M25 25q4 3 0 5t-9 1" fill="none" stroke="#9dbde2" strokeWidth="2" />
                    </svg>
                  </div>
                  <div className="w-[386px] pt-[10px]">
                    <div className="flex items-center">
                      <div className="w-[126px]">Полное доменное имя</div>
                      <Field dis w="w-[237px]" />
                    </div>
                    <div className="mt-[7px] h-[22px] text-[9.500px] leading-[11px] tracking-[-0.2px] whitespace-nowrap">
                      Введите имя узла и домен контроллера. Если не уверены, уточните у
                      <br />
                      администратора сети.
                    </div>
                    <div className="mt-[14px] flex items-center">
                      <div className="w-[126px]">Имя узла:</div>
                      <Field w="w-[237px]" />
                    </div>
                    <div className="mt-[7px] flex items-center">
                      <div className="w-[126px]">Домен:</div>
                      <Field w="w-[237px]" />
                    </div>
                    <div className="mt-[9px] text-[9.500px] leading-[11px] tracking-[-0.14px] whitespace-nowrap">
                      Если контроллер настроен на автоматическое получение параметров (через DHCP), это
                      <br />
                      имя будет зарегистрировано на сервере DNS. Это позволит главному компьютеру
                      <br />
                      обращаться к этому контроллеру, используя его доменное имя в качестве сетевого
                      <br />
                      адреса.
                      <div className="mt-[5px]">Это требует согласованной работы серверов DHCP и DNS.</div>
                    </div>
                  </div>
                </div>
              </div>
            </div>
          </div>
          <div className="mt-[5px] -ml-[3px] flex items-center">
            <div className="border border-black">
              <div className={`${BTN} h-[31px] w-[160px]`}>
                <div className="flex h-[25px] w-[150px] items-center justify-center border border-dotted border-black tracking-[0px] whitespace-nowrap">Загрузить настройки TCP/IP</div>
              </div>
            </div>
            <div className={`${BTN} ml-[160px] h-[33px] w-[82px]`}>OK</div>
            <div className={`${BTN} ml-[8px] h-[33px] w-[82px]`}>Отмена</div>
          </div>
        </div>
      </div>
    </div>
  );
}

/* ---------- Yandex.Disk explorer window ---------- */
const MiniFolder = ({ mark }: { mark: "cloud" | "ring" | "cut" }) => (
  <svg width="16" height="15" viewBox="0 0 16 15" className="shrink-0">
    <path d="M.5 1.500h6l1.500 2h7.500v10H.5z" fill="#ffe37a" stroke="#e9c94a" />
    {mark === "cut" && <path d="M5 6l6 5M11 6l-6 5" stroke="#c79a10" strokeWidth="1.400" />}
    {mark === "cloud" && <path d="M1 14q-1-3 2-3 1-3 4-2 3 1 2 3 2 0 1 2.500z" fill="#fff" stroke="#2d73d6" />}
    {mark === "ring" && <circle cx="5" cy="10" r="4" fill="#fff" stroke="#e06a5a" strokeDasharray="9 4" />}
  </svg>
);

const Cog = () => (
  <svg width="20" height="20" viewBox="0 0 20 20" className="ml-[25px]">
    <circle cx="10" cy="10" r="5.200" fill="none" stroke="#56575d" strokeWidth="3" />
    {[0, 45, 90, 135, 180, 225, 270, 315].map((a) => (
      <rect key={a} x="8.700" y="0.800" width="2.600" height="4" fill="#56575d" transform={`rotate(${a} 10 10)`} />
    ))}
  </svg>
);

function Explorer() {
  return (
    <div className="absolute top-[491px] left-[201px] flex h-[290px] w-[998px] flex-col rounded-[7px] border border-[#4b535d] bg-[#d5deea] shadow-[inset_0_0_0_1px_#eef3f9]">
      <div className="flex h-[27px] items-start">
        <div className="mt-[6px] ml-[6px]"><MiniFolder mark="cut" /></div>
        <div className={`${SEGOE} mt-[4px] ml-[4px] text-[12px] leading-[18px] tracking-[-0.2px]`}>Скриншоты - Яндекс.Диск</div>
        <div className="mr-[6px] ml-auto flex h-[18px] w-[47px] items-center justify-center rounded-b-[4px] border border-t-0 border-[#8a93a3]"><Glyph kind="close" /></div>
      </div>
      <div className={`${SEGOE} mx-[5px] flex flex-1 flex-col border border-[#646c76] bg-white`}>
        <div className="flex h-[23px] items-center bg-[#f0f0f0] pl-[8px] text-[12px] tracking-[-0.25px] text-[#6d6d6d]">
          <div className="w-[45px]">Файл</div>
          <div className="w-[56px]">Правка</div>
          <div className="w-[35px]">Вид</div>
          <div>Сервис</div>
        </div>
        <div className="flex h-[38px] items-center bg-[#f0f0f0] pb-[3px] pl-[11px]">
          <svg width="16" height="12" viewBox="0 0 16 12"><path d="M15 6H2M7 1L2 6l5 5" fill="none" stroke="#a9a9ad" strokeWidth="1.800" /></svg>
          <svg width="16" height="12" viewBox="0 0 16 12" className="ml-[27px]"><path d="M1 6h13M9 1l5 5-5 5" fill="none" stroke="#a9a9ad" strokeWidth="1.800" /></svg>
          <Cog />
          <svg width="8" height="4" viewBox="0 0 8 4" className="ml-[12px]"><path d="M0 0h8L4 4z" fill="#222" /></svg>
          <div className="ml-[9px] h-[34px] w-px bg-[#8f8f8f]" />
          <svg width="18" height="14" viewBox="0 0 18 14" className="ml-auto">
            <path d="M1 2h2M1 7h2M1 12h2M5 2h13M5 7h13M5 12h13" stroke="#44464c" strokeWidth="1.700" />
          </svg>
          <svg width="8" height="4" viewBox="0 0 8 4" className="mr-[3px] ml-[13px]"><path d="M0 0h8L4 4z" fill="#222" /></svg>
        </div>
        <div className="flex flex-1">
          <div className="w-[300px] text-[12px] tracking-[-0.25px]">
            <div className="flex h-5 items-center pl-[41px]"><MiniFolder mark="cloud" /><span className="ml-[5px]">Новая папка</span></div>
            <div className="flex h-5 items-center pl-[9px]">
              <svg width="6" height="6" viewBox="0 0 6 6"><path d="M6 0v6H0z" fill="#333" /></svg>
              <svg width="16" height="14" viewBox="0 0 16 14" className="ml-[6px]">
                <path d="M4 5q3-5 11-3l-5 4z" fill="#152a40" />
                <ellipse cx="8" cy="7.500" rx="8" ry="4.800" fill="#1d7fe8" transform="rotate(-30 8 7)" />
                <ellipse cx="9" cy="8.500" rx="4" ry="2" fill="#fff" transform="rotate(-30 9 8.500)" />
              </svg>
              <span className="ml-[5px] whitespace-nowrap">Яндекс.Диск - ctcweb</span>
            </div>
            <div className="flex h-5 items-center pl-[41px]"><MiniFolder mark="cloud" /><span className="ml-[5px]">Новая папка</span></div>
            <div className="flex h-5 items-center rounded-[2px] border border-[#d6d6d6] bg-linear-to-b from-[#f8f8f8] to-[#e5e5e5] pl-[40px]"><MiniFolder mark="ring" /><span className="ml-[5px]">Скриншоты</span></div>
            <div className="flex h-[8px] items-end border-b-[3px] border-[#f0f0f0] pl-[23px]">
              <div className="h-[3px] w-[13px] rounded-t-full bg-[#3a3a3e]" />
            </div>
            <div className="pt-[10px] pl-[18px] text-[13px] leading-[20px] tracking-[0.2px]">Доступно 5 ГБ</div>
            <div className="mt-[10px] ml-[18px] flex h-[36px] items-center rounded-[6px] bg-[#ffcc00] pl-[59px] text-[13px] tracking-[0.2px]">Купить место</div>
          </div>
          <div className="flex-1" />
          <div className="mt-px flex h-[179px] w-[16px] flex-col items-center bg-[#f0f0f0] pt-[7px]">
            <svg width="8" height="4" viewBox="0 0 8 4"><path d="M0 4h8L4 0z" fill="#444" /></svg>
            <div className="mt-[7px] h-[15px] w-[15px] border border-[#979797] bg-linear-to-r from-white to-[#d5d5d8]" />
            <svg width="8" height="4" viewBox="0 0 8 4" className="mt-auto mb-[7px]"><path d="M0 0h8L4 4z" fill="#444" /></svg>
          </div>
        </div>
      </div>
    </div>
  );
}

/* ---------- taskbar ---------- */
const TASK = "flex h-[39px] w-[60px] items-center justify-center rounded-[3px] border border-[#56708c] bg-linear-to-br from-[#e6f0fa] via-[#c9dcf0] to-[#b4cde6] shadow-[inset_0_0_0_1px_#eef6fd]";

function Bad({ x, y }: { x: number; y: number }) {
  return (
    <g transform={`translate(${x} ${y})`}>
      <circle cx="4.500" cy="4.500" r="4.500" fill="#e0291f" />
      <path d="M2.500 2.500l4 4M6.500 2.500l-4 4" stroke="#fff" strokeWidth="1.400" />
    </g>
  );
}

function Taskbar() {
  return (
    <div className="absolute top-[760px] left-0 flex h-[40px] w-[1280px] border-t border-[#3b4450] bg-[linear-gradient(90deg,#93a8be_0,#9aaec4_5%,#b3cde9_8%,#b3cfec_45%,#a9c4e0_60%,#aec9e5_66%,#8ea5bd_78%,#8fa4ba_100%)] shadow-[inset_0_1px_0_#dbe8f5]">
      <div className="flex w-[307px] items-center">
        <svg width="36" height="36" viewBox="0 0 36 36" className="ml-[9px]">
          <circle cx="18" cy="18" r="17.500" fill="url(#orb)" stroke="#2b4a6b" />
          <path d="M10 10q4-3 7-.6l-1.500 7q-4-2-7 .3z" fill="#f0602a" />
          <path d="M18.500 10.500q4 2.500 8.500.5l-2 7q-4 1.500-8-.7z" fill="#8cc63c" />
          <path d="M8 18.500q4-2.500 7-.6l-1.500 7q-4-2-7.500.3z" fill="#35a3e8" />
          <path d="M16.500 19q4 2.500 8 .7l-2 6.500q-4 2-7.500-.2z" fill="#fbc928" />
          <ellipse cx="18" cy="8" rx="13" ry="6.500" fill="#fff" opacity=".28" />
        </svg>
        <svg width="32" height="32" viewBox="0 0 32 32" className="ml-[28px] overflow-visible">
          <path fillRule="evenodd" d="M16.500 3.500C25 3.500 29.500 9 29.300 19H11.500c.5 5.500 8 6.500 10.500 2.500h7C27 27 22.500 30 16.500 30 9 30 4 25 4 17S9.500 3.500 16.500 3.500zM11.500 14h11c-.5-6-10.500-6-11 0z" fill="#3ca9ea" stroke="#1c7cc4" strokeWidth=".7" />
          <path d="M3 30.500C-3 26 8 8 23 1.800c5-2 7 1 5.500 6" fill="none" stroke="#d99a14" strokeWidth="3.200" />
          <path d="M3 30.500C-3 26 8 8 23 1.800c5-2 7 1 5.500 6" fill="none" stroke="#f8d348" strokeWidth="2" />
        </svg>
        <svg width="34" height="30" viewBox="0 0 34 30" className="ml-[29px]">
          <path d="M2 2h10l2 3h18v22H2z" fill="#efcf75" stroke="#b98f30" />
          <path d="M3 9h28v17H3z" fill="#fbe7a4" />
          <path d="M5 1h4v3H5z" fill="#2eac3a" />
          <path d="M13 3h4v2h-4z" fill="#d43" />
          <path d="M22 4h4v2h-4z" fill="#28d" />
          <path d="M6 29V18h22v11h-5v-5H11v5z" fill="#8ac8e8" stroke="#4a90b8" />
        </svg>
        <svg width="32" height="24" viewBox="0 0 32 24" className="ml-[28px]">
          <path d="M0 13L29 2 30 22l-9-5-6 3-2-6z" fill="#3aa5de" />
          <path d="M12 14L29 2 15 20z" fill="#1d76b4" />
        </svg>
        <svg width="34" height="34" viewBox="0 0 34 34" className="ml-[28px] overflow-visible">
          <Pc x={1} y={1} off />
          <Pc x={18} y={0} />
          <path d="M0 22h8v3H0zM26 21h7v3h-7z" fill="#d8d8da" stroke="#8e8e92" strokeWidth=".6" />
          <path d="M10 25L2 32" stroke="#e2a625" strokeWidth="4.500" />
          <circle cx="15" cy="18" r="9.500" fill="url(#glass)" stroke="#54aedb" />
        </svg>
      </div>
      <div className="flex gap-[2px]">
        <div className={TASK}><Logo s={32} /></div>
        <div className={TASK}>
          <svg width="32" height="32" viewBox="0 0 32 32">
            <circle cx="16" cy="14.500" r="13.500" fill="#2a62ad" />
            <path d="M10 4q8-5 15 2-5-1-6 2-6 1-9-4z" fill="#4fa4dc" />
            <path d="M2 5l4 4 5-1 2 4 4 1-3 4-4 1 4 4q6 2 9-3l5-7q2 9-4 15T9 29.500Q1 25 1 15z" fill="#ea6a1e" />
            <path d="M27 5q5 7 3 14t-8 10q4-6 5-12z" fill="#fbd038" />
          </svg>
        </div>
        <div className={TASK}>
          <svg width="34" height="24" viewBox="0 0 34 24">
            <path d="M5 14Q10 1 20 2l10 3-10 8z" fill="#12283e" />
            <ellipse cx="17" cy="12.500" rx="17" ry="7" fill="url(#blue)" transform="rotate(-22 17 12.500)" />
            <ellipse cx="19.500" cy="15" rx="8" ry="3.300" fill="#fff" transform="rotate(-22 19.500 15)" />
          </svg>
        </div>
      </div>
      <div className="mt-[10px] ml-[27px] h-[29px] w-[481px] rounded-t-[3px] bg-white/80" />
      <div className={`${SEGOE} flex flex-1 text-white`}>
        <div className="mt-[9px] ml-[19px] w-[16px] text-[11px] leading-[16px]">EN</div>
        <svg width="8" height="5" viewBox="0 0 8 5" className="mt-[18px] ml-[15px]"><path d="M0 5h8L4 0z" fill="#fff" stroke="#567" strokeWidth=".4" /></svg>
        <svg width="17" height="17" viewBox="0 0 16 16" className="mt-[12px] ml-[11px]">
          <path d="M1.500 0v16M2 2q4-2 6 0t6 0v6q-4 2-6 0T2 8z" fill="#fff" stroke="#4d5b6a" />
          <Bad x={7} y={6} />
        </svg>
        <svg width="16" height="16" viewBox="0 0 16 16" className="mt-[12px] ml-[8px]">
          <ellipse cx="8" cy="7" rx="8" ry="4.500" fill="#c0c9d2" stroke="#5d6a78" transform="rotate(-28 8 7)" />
          <ellipse cx="8.500" cy="8.500" rx="4" ry="1.800" fill="#8797a8" transform="rotate(-28 8 8)" />
        </svg>
        <svg width="17" height="17" viewBox="0 0 16 16" className="mt-[12px] ml-[8px]">
          <path d="M2 2h2V.5h4V2h2v13H2z" fill="#f4f7fa" stroke="#4d5b6a" />
          <Bad x={7} y={6} />
        </svg>
        <svg width="16" height="16" viewBox="0 0 16 16" className="mt-[12px] ml-[7px]">
          <path d="M1 1v4h4V1M3 5v10h5" fill="none" stroke="#fff" strokeWidth="1.600" />
          <rect x="6" y="3" width="9" height="8" fill="#7d8b99" stroke="#f4f4f4" />
          <path d="M10.500 6l5 9.500h-10z" fill="#f8d21c" stroke="#a8820c" strokeWidth=".6" />
          <path d="M10.500 9v4" stroke="#222" strokeWidth="1.200" />
        </svg>
        <svg width="16" height="16" viewBox="0 0 16 16" className="mt-[12px] ml-[8px]">
          <path d="M1 5h3l4-4v14l-4-4H1z" fill="#fff" stroke="#6a7886" strokeWidth=".7" />
          <circle cx="11" cy="10.500" r="4.300" fill="#fff" stroke="#e0291f" strokeWidth="1.700" />
          <path d="M8 7.500l6 6" stroke="#e0291f" strokeWidth="1.600" />
        </svg>
        <div className="mt-[3px] ml-[15px] w-[62px] text-center text-[12px] leading-[17px] tracking-[-0.75px] whitespace-nowrap">
          <div>16:08</div>
          <div className="tracking-[-0.6px]">30.04.2024</div>
        </div>
        <div className="ml-auto h-[39px] w-[15px] border border-[#5a6b7e] bg-linear-to-br from-[#a8bccf] via-[#6e8aa6] to-[#9db4cb]" />
      </div>
    </div>
  );
}

export default function App() {
  return (
    <div className="relative h-[823px] w-[1280px] overflow-hidden bg-white">
      <Defs />
      <div className="h-[760px] w-[1280px] bg-black">
        <div className="grid w-[300px] auto-rows-[108px] grid-cols-4 pt-[7px]">
          {cells.map((c, i) => (
            <Shortcut key={i} cell={c} />
          ))}
        </div>
      </div>
      <div className="absolute top-[439px] left-[1200px] w-[75px]">
        <Shortcut cell={{ icon: <Pdf link />, a: "E_tool_manul" }} />
      </div>
      <div className={`${SEGOE} absolute top-[709px] left-[1195px] flex w-[80px] flex-col items-end text-[12px] leading-[17px] tracking-[-0.25px] whitespace-nowrap text-white`}>
        <div>Windows 7</div>
        <div className="mt-px">Сборка 7601</div>
        <div className="-mt-px tracking-[-0.35px]">ся подлинной</div>
      </div>
      <Explorer />
      <MainWindow />
      <div className="absolute top-[127px] left-[484px] h-[506px] w-[539px] rounded-[6px] border border-[#15181c] bg-[#555c64]" />
      <Dialog />
      <Taskbar />
      <div className={`${MSSANS} absolute top-[779px] left-[535px] text-[32px] leading-[36px] tracking-[-0.2px] whitespace-nowrap text-[#e53a30]`}>
        Parking_3fl_N1 ближе ко входу
      </div>
    </div>
  );
}
